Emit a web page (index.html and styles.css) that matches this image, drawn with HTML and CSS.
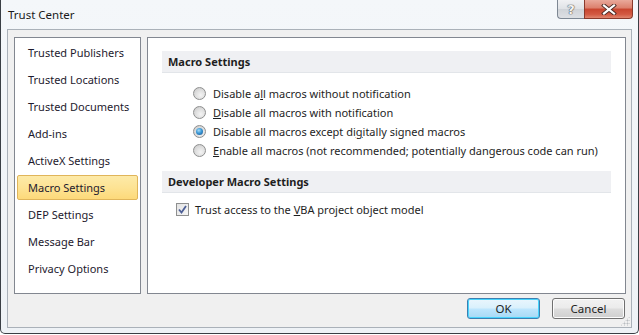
FILE: index.html
```html
<!DOCTYPE html>
<html>
<head>
<meta charset="utf-8">
<link rel="stylesheet" href="styles.css">
</head>
<body>
<div class="window">
  <div class="titlebar">
    <div class="title">Trust Center</div>
    <div class="caption-buttons">
      <div class="cap-btn help">?</div>
      <div class="cap-btn close">
        <svg width="16" height="11" viewBox="0 0 16 11"><path d="M3 1.5 L13 9.5 M13 1.5 L3 9.5" stroke="#4a2a24" stroke-width="4" stroke-linecap="square"/><path d="M3 1.5 L13 9.5 M13 1.5 L3 9.5" stroke="#ffffff" stroke-width="2.2" stroke-linecap="square"/></svg>
      </div>
    </div>
  </div>
  <div class="frame">
    <div class="panels">
      <ul class="nav">
        <li class="nav-item">Trusted Publishers</li>
        <li class="nav-item">Trusted Locations</li>
        <li class="nav-item">Trusted Documents</li>
        <li class="nav-item">Add-ins</li>
        <li class="nav-item">ActiveX Settings</li>
        <li class="nav-item selected">Macro Settings</li>
        <li class="nav-item">DEP Settings</li>
        <li class="nav-item">Message Bar</li>
        <li class="nav-item">Privacy Options</li>
      </ul>
      <div class="content">
        <div class="section-header">Macro Settings</div>
        <div class="options">
          <div class="option"><span class="radio"></span><span>Disable a<u>l</u>l macros without notification</span></div>
          <div class="option"><span class="radio"></span><span><u>D</u>isable all macros with notification</span></div>
          <div class="option"><span class="radio checked"></span><span>Disable all macros except di<u>g</u>itally signed macros</span></div>
          <div class="option"><span class="radio"></span><span><u>E</u>nable all macros (not recommended; potentially dangerous code can run)</span></div>
        </div>
        <div class="section-header dev">Developer Macro Settings</div>
        <div class="check-row">
          <span class="checkbox"><svg width="9" height="9" viewBox="0 0 9 9"><path d="M1 4.5 L3.5 7.5 L8 1" fill="none" stroke="#4d5f96" stroke-width="1.8"/></svg></span>
          <span>Trust access to the <u>V</u>BA project object model</span>
        </div>
      </div>
    </div>
    <div class="buttons">
      <button class="btn default">OK</button>
      <button class="btn">Cancel</button>
    </div>
    <div class="grip"></div>
  </div>
</div>
</body>
</html>
```

FILE: styles.css
```css
* { box-sizing: border-box; }
html, body { margin: 0; padding: 0; background: #ffffff; }
body {
  font-family: "Noto Sans", "Open Sans", sans-serif;
  font-size: 11px;
  color: #1e1e1e;
  width: 639px;
  height: 335px;
  overflow: hidden;
}
.window {
  width: 639px;
  height: 334px;
  border-left: 1px solid #3a3f45;
  border-right: 1px solid #3a3f45;
  border-bottom: 1px solid #3a3f45;
  border-radius: 0 0 5px 5px;
  background: linear-gradient(180deg, #f4f7fa 0%, #eef2f6 100%);
  padding: 0 5px 0 6px;
}
.titlebar {
  height: 29px;
  display: flex;
  align-items: flex-start;
  justify-content: space-between;
}
.title {
  padding: 7px 0 0 1px;
  font-size: 11.5px;
  line-height: 16px;
  color: #1a1a1a;
}
.caption-buttons {
  display: flex;
}
.cap-btn {
  height: 19px;
  display: flex;
  align-items: center;
  justify-content: center;
  border: 1px solid #7d8793;
  border-top: none;
}
.help {
  width: 27px;
  border-radius: 0 0 0 4px;
  border-right: none;
  background: linear-gradient(180deg, #f0f1f3 0%, #dfe2e6 50%, #cfd3d8 51%, #dde0e4 100%);
  font-family: "DejaVu Sans", sans-serif;
  font-weight: bold;
  font-size: 13px;
  color: #f4f4f4;
  text-shadow: 0 0 1px #555, 0 0 1px #555, 0 0 1px #555;
}
.close {
  width: 49px;
  border-radius: 0 0 4px 0;
  border-color: #8a3a2c;
  background: linear-gradient(180deg, #e9a99b 0%, #dc7f6c 45%, #c8452f 50%, #d35a43 80%, #e0866f 100%);
}
.frame {
  position: relative;
  width: 625px;
  height: 299px;
  border: 1px solid #aab1b9;
  background: #f0f0f0;
  padding: 7px 5px 0 6px;
}
.panels {
  display: flex;
  gap: 6px;
  height: 257px;
}
.nav {
  list-style: none;
  margin: 0;
  width: 127px;
  flex-shrink: 0;
  height: 100%;
  border: 1px solid #828790;
  background: #ffffff;
  padding: 2px 2px 0 2px;
  display: flex;
  flex-direction: column;
  gap: 2px;
}
.nav-item {
  height: 25px;
  line-height: 23px;
  padding-left: 10px;
  border: 1px solid transparent;
  border-radius: 2px;
  color: #1e1a2e;
  white-space: nowrap;
}
.nav-item.selected {
  border-color: #e0b55a;
  background: linear-gradient(180deg, #fdeaa8 0%, #fde394 50%, #fdd97a 100%);
}
.content {
  flex: 1;
  min-width: 0;
  height: 100%;
  border: 1px solid #828790;
  background: #ffffff;
  padding: 13px 14px 0 14px;
}
.section-header {
  height: 22px;
  line-height: 21px;
  padding-left: 6px;
  font-weight: bold;
  background: #eff0f3;
  border-bottom: 1px solid #e2e5e9;
  color: #1e1e1e;
}
.options {
  margin-top: 11px;
  padding-left: 31px;
  display: flex;
  flex-direction: column;
}
.option {
  height: 19px;
  display: flex;
  align-items: center;
  gap: 7px;
  white-space: nowrap;
}
.radio {
  width: 13px;
  height: 13px;
  border-radius: 50%;
  border: 1px solid #8e8f8f;
  background: radial-gradient(circle at 60% 65%, #f4f4f4 0%, #dcdcdc 55%, #c4c4c4 100%);
  flex-shrink: 0;
  position: relative;
}
.radio.checked::after {
  content: "";
  position: absolute;
  left: 2px;
  top: 2px;
  width: 7px;
  height: 7px;
  border-radius: 50%;
  background: radial-gradient(circle at 40% 35%, #a8dcf7 0%, #3a98d6 45%, #1a4f8a 100%);
}
.section-header.dev {
  margin-top: 11px;
}
.check-row {
  margin-top: 7px;
  padding-left: 14px;
  height: 19px;
  display: flex;
  align-items: center;
  gap: 6px;
}
.checkbox {
  width: 13px;
  height: 13px;
  border: 1px solid #8e8f8f;
  background: linear-gradient(135deg, #e3e3e3 0%, #f6f6f6 100%);
  display: flex;
  align-items: center;
  justify-content: center;
  flex-shrink: 0;
}
.buttons {
  display: flex;
  justify-content: flex-end;
  gap: 12px;
  margin-top: 4px;
  padding-right: 1px;
}
.btn {
  width: 73px;
  height: 21px;
  font-family: inherit;
  font-size: 11.5px;
  color: #1e1e1e;
  border: 1px solid #707070;
  border-radius: 3px;
  background: linear-gradient(180deg, #f2f2f2 0%, #ebebeb 48%, #dddddd 52%, #cfcfcf 100%);
  box-shadow: inset 0 0 0 1px #fcfcfc;
  padding: 0;
}
.btn.default {
  border-color: #3c7fb1;
  box-shadow: inset 0 0 0 1px #48d4fc;
  background: linear-gradient(180deg, #eaf6fd 0%, #d9f0fc 48%, #bee6fd 52%, #a7d9f5 100%);
}
.grip {
  position: absolute;
  right: 1px;
  bottom: 1px;
  width: 10px;
  height: 10px;
  background:
    radial-gradient(circle, #b8bcc0 0.8px, transparent 1.2px) 0 0 / 3px 3px;
  clip-path: polygon(100% 0, 100% 100%, 0 100%);
}
```
